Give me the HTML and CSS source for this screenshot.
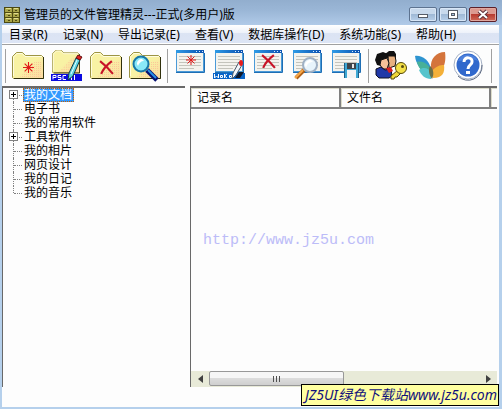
FILE: index.html
```html
<!DOCTYPE html>
<html lang="zh">
<head>
    <meta charset="UTF-8">
    <meta name="viewport" content="width=device-width, initial-scale=1.0">
    <title>管理员的文件管理精灵</title>
    <link rel="stylesheet" href="styles.css">
</head>
<body>
    <!-- 公用图形 -->
    <svg class="defs" width="0" height="0" aria-hidden="true">
        <defs>
            <linearGradient id="gFolder" x1="0" y1="0" x2="1" y2="1">
                <stop offset="0.5" stop-color="#f8f2a4"/>
                <stop offset="1" stop-color="#fbd8a0"/>
            </linearGradient>
            <linearGradient id="gBar" x1="0" x2="1">
                <stop offset="0" stop-color="#2f9be6"/>
                <stop offset="1" stop-color="#0a50b0"/>
            </linearGradient>
            <pattern id="pDots" width="2" height="2" patternUnits="userSpaceOnUse">
                <rect width="1" height="1" fill="#fbc898"/>
            </pattern>
            <symbol id="folder" viewBox="0 0 32 32">
                <path d="M.5 27.500V6.500L4.500 2.500H10.500L13.500 5.500H29.500L31.500 7.500V28.500H1.500Z" fill="url(#gFolder)" stroke="#9c9444"/>
                <path d="M13 22L22 12H30V27H8Z" fill="url(#pDots)"/>
                <path d="M1.500 26V7L5 3.500H10L13 6.500H30" fill="none" stroke="#fffde0"/>
                <path d="M2 28.500H31.500V7" fill="none" stroke="#30300c"/>
            </symbol>
            <symbol id="sheet" viewBox="0 0 32 32">
                <rect x="2.500" y=".5" width="27" height="21" fill="#f4f3ee" stroke="#4a9ad8"/>
                <rect x="2" y="0" width="28" height="3" fill="url(#gBar)"/>
                <path d="M22 1.500H23M25 1.500H26M28 1.500H29" stroke="#d8ecff"/>
                <path d="M5 6.500H27M5 9.500H27M5 12.500H27M5 15.500H27M5 18.500H20" stroke="#c4c4bc"/>
                <path d="M2 22.500H30.500V3" fill="none" stroke="#1e6eb4"/>
            </symbol>
            <symbol id="star" viewBox="0 0 10 10">
                <path d="M5 0V10M0 5H10M1.500 1.500L8.500 8.500M8.500 1.500L1.500 8.500" stroke="#e01818" fill="none"/>
            </symbol>
            <symbol id="cross" viewBox="0 0 14 14">
                <path d="M1 1C5 4 9 8 13 13M12 1C8 4 4 8 2 13" stroke="#c81428" stroke-width="2" fill="none"/>
            </symbol>
        </defs>
    </svg>

    <div class="window">
        <header class="titlebar">
            <svg class="app-icon" width="16" height="16" viewBox="0 0 16 16" aria-hidden="true">
                <rect x=".5" y=".5" width="15" height="15" fill="#a9a548" stroke="#4a4812"/>
                <path d="M1 5.500H15M1 10.500H15M8.500 1V15" stroke="#4f4c14"/>
                <path d="M2 1.500H7M10 1.500H14M2 6.500H7M10 6.500H14M2 11.500H7M10 11.500H14" stroke="#e2de90"/>
                <path d="M4 3.500H6M11 3.500H13M4 8.500H6M11 8.500H13M4 13.500H6M11 13.500H13" stroke="#4f4c14"/>
            </svg>
            <h1 class="title">管理员的文件管理精灵---正式(多用户)版</h1>
            <div class="controls">
                <button class="ctl" aria-label="最小化">
                    <svg width="14" height="11" viewBox="0 0 14 11"><rect x="2.500" y="5.500" width="9" height="3" fill="#fff" stroke="#555c68"/></svg>
                </button>
                <button class="ctl" aria-label="最大化">
                    <svg width="14" height="11" viewBox="0 0 14 11"><rect x="2.500" y="1.500" width="9" height="8" fill="#fff" stroke="#555c68"/><rect x="5.500" y="4.500" width="3" height="2" fill="#a9c4e2" stroke="#555c68"/></svg>
                </button>
                <button class="ctl ctl-close" aria-label="关闭">
                    <svg width="14" height="11" viewBox="0 0 14 11"><path d="M3 2L11 9M11 2L3 9" stroke="#5c3038" stroke-width="4"/><path d="M3 2L11 9M11 2L3 9" stroke="#fff" stroke-width="2"/></svg>
                </button>
            </div>
        </header>

        <nav class="menu">
            <button>目录(R)</button>
            <button>记录(N)</button>
            <button>导出记录(E)</button>
            <button>查看(V)</button>
            <button>数据库操作(D)</button>
            <button>系统功能(S)</button>
            <button>帮助(H)</button>
        </nav>

        <div class="toolbar">
            <span class="sep"></span>
            <div class="group">
                <button aria-label="新建目录">
                    <svg viewBox="0 0 32 32"><use href="#folder"/><use href="#star" x="11" y="12" width="11" height="11"/></svg>
                </button>
                <button aria-label="修改目录">
                    <svg viewBox="0 0 32 32">
                        <use href="#folder" x="1" y="-2" width="28" height="28"/>
                        <rect x="0" y="24" width="31" height="7" fill="#0a0ae0"/>
                        <path d="M2 29.500V25.500H5V27.500H2M10 25.500H7V27.500H10V29.500H7M15 25.500H12V29.500H15M17.500 25V30M20.500 25V30M23.500 25V30" stroke="#fff" fill="none"/>
                        <path d="M25 8L29 10L22 26L17 30L18 23Z" fill="#5fd6e4" stroke="#123c48"/>
                        <path d="M26 10L20 24" stroke="#e8ffff"/>
                        <path d="M25 8L27 5L31 7L29 10Z" fill="#e02020" stroke="#601010"/>
                    </svg>
                </button>
                <button aria-label="删除目录">
                    <svg viewBox="0 0 32 32"><use href="#folder"/><use href="#cross" x="9" y="10" width="15" height="15"/></svg>
                </button>
                <button aria-label="查找目录">
                    <svg viewBox="0 0 32 32">
                        <use href="#folder"/>
                        <path d="M18 20L28 30" stroke="#061070" stroke-width="5"/>
                        <path d="M19 20L27 28" stroke="#2a90e8" stroke-width="2"/>
                        <circle cx="12" cy="14" r="7.500" fill="#8ae8f8" stroke="#1878a8" stroke-width="2"/>
                        <path d="M8 14C8 11 10 9 13 9L15 11C12 11 10 13 9 16Z" fill="#fff"/>
                    </svg>
                </button>
            </div>
            <span class="sep"></span>
            <div class="group">
                <button aria-label="新建记录">
                    <svg viewBox="0 0 32 32"><use href="#sheet"/><use href="#star" x="12" y="5" width="10" height="10"/></svg>
                </button>
                <button aria-label="修改记录">
                    <svg viewBox="0 0 32 32">
                        <use href="#sheet"/>
                        <rect x="0" y="23" width="32" height="6" fill="#0864c8"/>
                        <path d="M1.500 24V28L3.500 26L5.500 28V24M7.500 25.500H9.500V27.500H7.500ZM11.500 28V24M11.500 26L14 24M11.500 26L14 28M16.500 25.500H18.500V27.500H16.500Z" stroke="#fff" fill="none"/>
                        <path d="M26 12L29 15L23 25L19 29L20 23Z" fill="#f2f6fa" stroke="#485868"/>
                        <path d="M26 22H31L27 28H22Z" fill="#101828"/>
                        <ellipse cx="28" cy="13" rx="2" ry="3" fill="#e81c1c"/>
                    </svg>
                </button>
                <button aria-label="删除记录">
                    <svg viewBox="0 0 32 32"><use href="#sheet"/><use href="#cross" x="9" y="4" width="15" height="15"/></svg>
                </button>
                <button aria-label="查找记录">
                    <svg viewBox="0 0 32 32">
                        <use href="#sheet"/>
                        <path d="M13 20L5 28" stroke="#b06018" stroke-width="4"/>
                        <path d="M12 20L4 28" stroke="#f8a848" stroke-width="2"/>
                        <circle cx="19" cy="15" r="7" fill="#e8f4fc" stroke="#9fb0c4" stroke-width="2"/>
                        <path d="M14 15C14 12 17 10 20 10L22 12C18 12 16 14 15 18Z" fill="#fff"/>
                    </svg>
                </button>
                <button aria-label="保存记录">
                    <svg viewBox="0 0 32 32">
                        <use href="#sheet"/>
                        <rect x="14" y="13" width="15" height="15" fill="#3fa8d4"/>
                        <path d="M14.500 13V28M28.500 13V28" stroke="#1b6088" fill="none"/>
                        <rect x="17" y="13" width="9" height="6" fill="#404448"/>
                        <rect x="22" y="14" width="2" height="4" fill="#e8e8e8"/>
                        <rect x="17" y="20" width="9" height="8" fill="#f4f4f4"/>
                    </svg>
                </button>
            </div>
            <span class="sep"></span>
            <div class="group">
                <button aria-label="用户权限">
                    <svg viewBox="0 0 32 32">
                        <path d="M10 4L14 1H19L21 4V8H12Z" fill="#111"/>
                        <path d="M13 6L20 6L21 11L20 16L14 18Z" fill="#e8b080" stroke="#111"/>
                        <path d="M0 10L2 4L8 2L13 4L12 9L6 11V16L2 15Z" fill="#111"/>
                        <path d="M6 10L12 8L14 13L12 19L8 19L5 15Z" fill="#f6c298" stroke="#111"/>
                        <path d="M1 19L6 17L10 20L16 19L17 26L14 28H4L1 25Z" fill="#2038a8" stroke="#101020"/>
                        <path d="M11 18L16 17L18 21L14 23Z" fill="#d82020"/>
                        <path d="M23 20L16 26V29H19L20 27H22L26 23" fill="#f0d838" stroke="#554808"/>
                        <circle cx="26" cy="18" r="5.500" fill="#f4e048" stroke="#554808"/>
                        <circle cx="27.500" cy="16.500" r="1.500" fill="#574c10"/>
                    </svg>
                </button>
                <button aria-label="主页">
                    <svg viewBox="0 0 32 32">
                        <path d="M1 6C8 5 15 10 17 19L14 22C6 20 2 14 1 6Z" fill="#2e94d0"/>
                        <path d="M3 12C9 10 15 15 17 20L13 23C7 21 4 17 3 12Z" fill="#48b098"/>
                        <path d="M5 20C10 16 15 19 17 22V29C11 29 7 25 5 20Z" fill="#55c4cc"/>
                        <path d="M17 18C16 9 22 2 31 2C32 9 31 14 29 18C24 18 20 20 18 24Z" fill="#d4743c"/>
                        <path d="M18 21C22 16 26 15 30 15C31 22 29 28 19 28Z" fill="#f4b038"/>
                        <path d="M16 16C20 19 20 25 18 29C15 25 14 20 16 16Z" fill="#6a7048"/>
                    </svg>
                </button>
                <button aria-label="帮助">
                    <svg viewBox="0 0 32 32">
                        <circle cx="15" cy="15" r="14" fill="#fff" stroke="#a4b0c4"/>
                        <path d="M5 26A14 14 0 0 0 29 15" fill="none" stroke="#5c6880"/>
                        <circle cx="15" cy="15" r="11.500" fill="#3068cc"/>
                        <path d="M5 11A11 11 0 0 1 25 11C18 7 12 11 5 11Z" fill="#4c80dc"/>
                        <path d="M11 12C11 6 20 7 19 12C19 15 15 15 15 19" fill="none" stroke="#fff" stroke-width="3"/>
                        <rect x="13" y="21" width="4" height="3" fill="#fff"/>
                    </svg>
                </button>
            </div>
            <span class="sep"></span>
        </div>

        <main class="panes">
            <ul class="tree">
                <li><button class="expander" aria-label="展开"></button><button class="node selected">我的文档</button></li>
                <li><button class="node">电子书</button></li>
                <li><button class="node">我的常用软件</button></li>
                <li><button class="expander" aria-label="展开"></button><button class="node">工具软件</button></li>
                <li><button class="node">我的相片</button></li>
                <li><button class="node">网页设计</button></li>
                <li><button class="node">我的日记</button></li>
                <li><button class="node">我的音乐</button></li>
            </ul>

            <section class="list">
                <table class="records">
                    <thead>
                        <tr>
                            <th class="col">记录名</th>
                            <th class="col">文件名</th>
                            <th></th>
                        </tr>
                    </thead>
                </table>
                <div class="list-body">
                    <span class="site-url">http://www.jz5u.com</span>
                </div>
                <div class="scrollbar">
                    <button class="arrow" aria-label="向左"><svg width="5" height="8" viewBox="0 0 5 8"><path d="M5 0V8L0 4Z" fill="#404040"/></svg></button>
                    <div class="track"><div class="thumb"><i></i><i></i><i></i></div></div>
                    <button class="arrow" aria-label="向右"><svg width="5" height="8" viewBox="0 0 5 8"><path d="M0 0V8L5 4Z" fill="#404040"/></svg></button>
                </div>
            </section>
        </main>

        <footer class="status"></footer>
    </div>

    <div class="stamp">JZ5UI绿色下载站www.jz5u.com</div>
</body>
</html>
```

FILE: styles.css
```css
* {
    box-sizing: border-box;
}
body {
    margin: 0;
    font-family: "Noto Sans", "Noto Sans CJK SC", sans-serif;
    font-size: 12px;
    color: #000;
}
button {
    margin: 0;
    padding: 0;
    border: none;
    background: none;
    font: inherit;
    color: inherit;
}
.defs {
    position: absolute;
}
.window {
    display: flex;
    flex-direction: column;
    min-height: 100vh;
    padding: 0 3px 2px 2px;
    background: #b5d0ec;
}

/* 标题栏 */
.titlebar {
    display: flex;
    align-items: center;
    height: 25px;
    margin: 0 -3px 0 -2px;
    padding: 4px 5px 0 4px;
    background: linear-gradient(#92aece, #9ab6d6 40%, #b0cae8);
}
.title {
    flex: 1;
    margin: 0 0 0 4px;
    font-size: 12px;
    font-weight: normal;
    line-height: 16px;
    white-space: nowrap;
}
.controls {
    display: flex;
    gap: 2px;
}
.ctl {
    display: flex;
    align-items: center;
    justify-content: center;
    width: 28px;
    height: 15px;
    border: 1px solid #5d7390;
    border-radius: 2px;
    background: linear-gradient(#c8d9ec 45%, #9fb9d6 50%, #b9d0ea);
    box-shadow: inset 0 0 0 1px #d8e6f6;
}
.ctl-close {
    border-color: #5c2028;
    background: linear-gradient(#dc9a90 45%, #b83c30 50%, #cf6a58);
    box-shadow: inset 0 0 0 1px #e0a8a0;
}

/* 菜单 */
.menu {
    display: flex;
    gap: 15px;
    height: 19px;
    padding: 0 7px;
    background: linear-gradient(#fff, #eef2fa 40%, #dbe3f3 45%, #dde5f5);
    line-height: 18px;
    white-space: nowrap;
}

/* 工具栏 */
.toolbar {
    display: flex;
    gap: 6px;
    align-items: center;
    height: 42px;
    padding: 3px;
    border-top: 1px solid #a0a0a0;
    background: #fdfdfd;
    box-shadow: 0 -1px #fff;
}
.sep {
    width: 1px;
    height: 34px;
    background: #a0a0a0;
}
.group {
    display: flex;
    gap: 7px;
}
.group button, .group svg {
    display: block;
    width: 32px;
    height: 32px;
}

/* 目录树和记录列表 */
.panes {
    display: grid;
    grid-template-columns: 183px 1fr;
    gap: 5px;
    flex: 1;
    padding-right: 2px;
    background: #fdfdfd;
}
.tree {
    margin: 0;
    padding: 0 0 0 5px;
    border: solid #696969;
    border-width: 2px 0 0 1px;
    font-family: "Liberation Sans", "Noto Sans CJK SC", sans-serif;
    list-style: none;
}
.tree li {
    position: relative;
    height: 14px;
    padding-left: 15px;
    line-height: 14px;
}
.tree li::before {
    content: "";
    position: absolute;
    left: 5px;
    top: 0;
    height: 14px;
    border-left: 1px dotted #808080;
}
.tree li:first-child::before {
    top: 7px;
    height: 7px;
}
.tree li:last-child::before {
    height: 7px;
}
.tree li::after {
    content: "";
    position: absolute;
    left: 6px;
    top: 7px;
    width: 8px;
    border-top: 1px dotted #808080;
}
.expander {
    position: absolute;
    z-index: 1;
    left: 1px;
    top: 2px;
    width: 9px;
    height: 9px;
    border: 1px solid #808080;
    background:
        linear-gradient(#000, #000) center / 5px 1px no-repeat,
        linear-gradient(#000, #000) center / 1px 5px no-repeat,
        #fff;
}
.node {
    display: block;
    height: 14px;
    padding: 0 1px;
    line-height: 14px;
    white-space: nowrap;
}
.node.selected {
    padding-right: 2px;
    background: #3399ff;
    outline: 1px dotted #c86000;
    outline-offset: -1px;
    color: #fff;
}
.list {
    display: flex;
    flex-direction: column;
    min-width: 0;
    border: solid #696969;
    border-width: 2px 0 0 1px;
}
.records {
    width: 100%;
    border-collapse: separate;
    border-spacing: 0;
    table-layout: fixed;
}
.records th {
    height: 21px;
    padding: 0 6px;
    border: solid #808080;
    border-width: 0 2px 2px 0;
    box-shadow: inset 1px 1px #dcdccb;
    font-weight: normal;
    line-height: 18px;
    text-align: left;
}
.records .col {
    width: 150px;
}
.records th:last-child {
    padding: 0;
    border-right: none;
}
.list-body {
    display: flex;
    flex: 1;
    align-items: center;
    padding-left: 12px;
}
.site-url {
    font-family: "Liberation Mono", monospace;
    font-size: 15px;
    color: #bcbcf8;
}
.scrollbar {
    display: flex;
    height: 16px;
    background: #e8ead8;
}
.arrow {
    display: flex;
    align-items: center;
    justify-content: center;
    width: 18px;
}
.track {
    flex: 1;
}
.thumb {
    display: flex;
    gap: 1px;
    align-items: center;
    justify-content: center;
    width: 50%;
    height: 15px;
    border: 1px solid #989898;
    border-radius: 2px;
    background: linear-gradient(#f6f6f6 45%, #dcdcdc 50%, #cfcfcf);
}
.thumb i {
    width: 2px;
    height: 6px;
    border-left: 1px solid #505050;
}
.status {
    height: 20px;
    background: #fdfdfd;
}

/* 右下角站点标签 */
.stamp {
    position: fixed;
    right: 3px;
    bottom: 3px;
    height: 22px;
    padding: 0 1px 0 3px;
    border: 1px solid #000;
    background: #ffffa0;
    color: #10107c;
    font-size: 14px;
    font-style: italic;
    line-height: 20px;
    white-space: nowrap;
}
```
